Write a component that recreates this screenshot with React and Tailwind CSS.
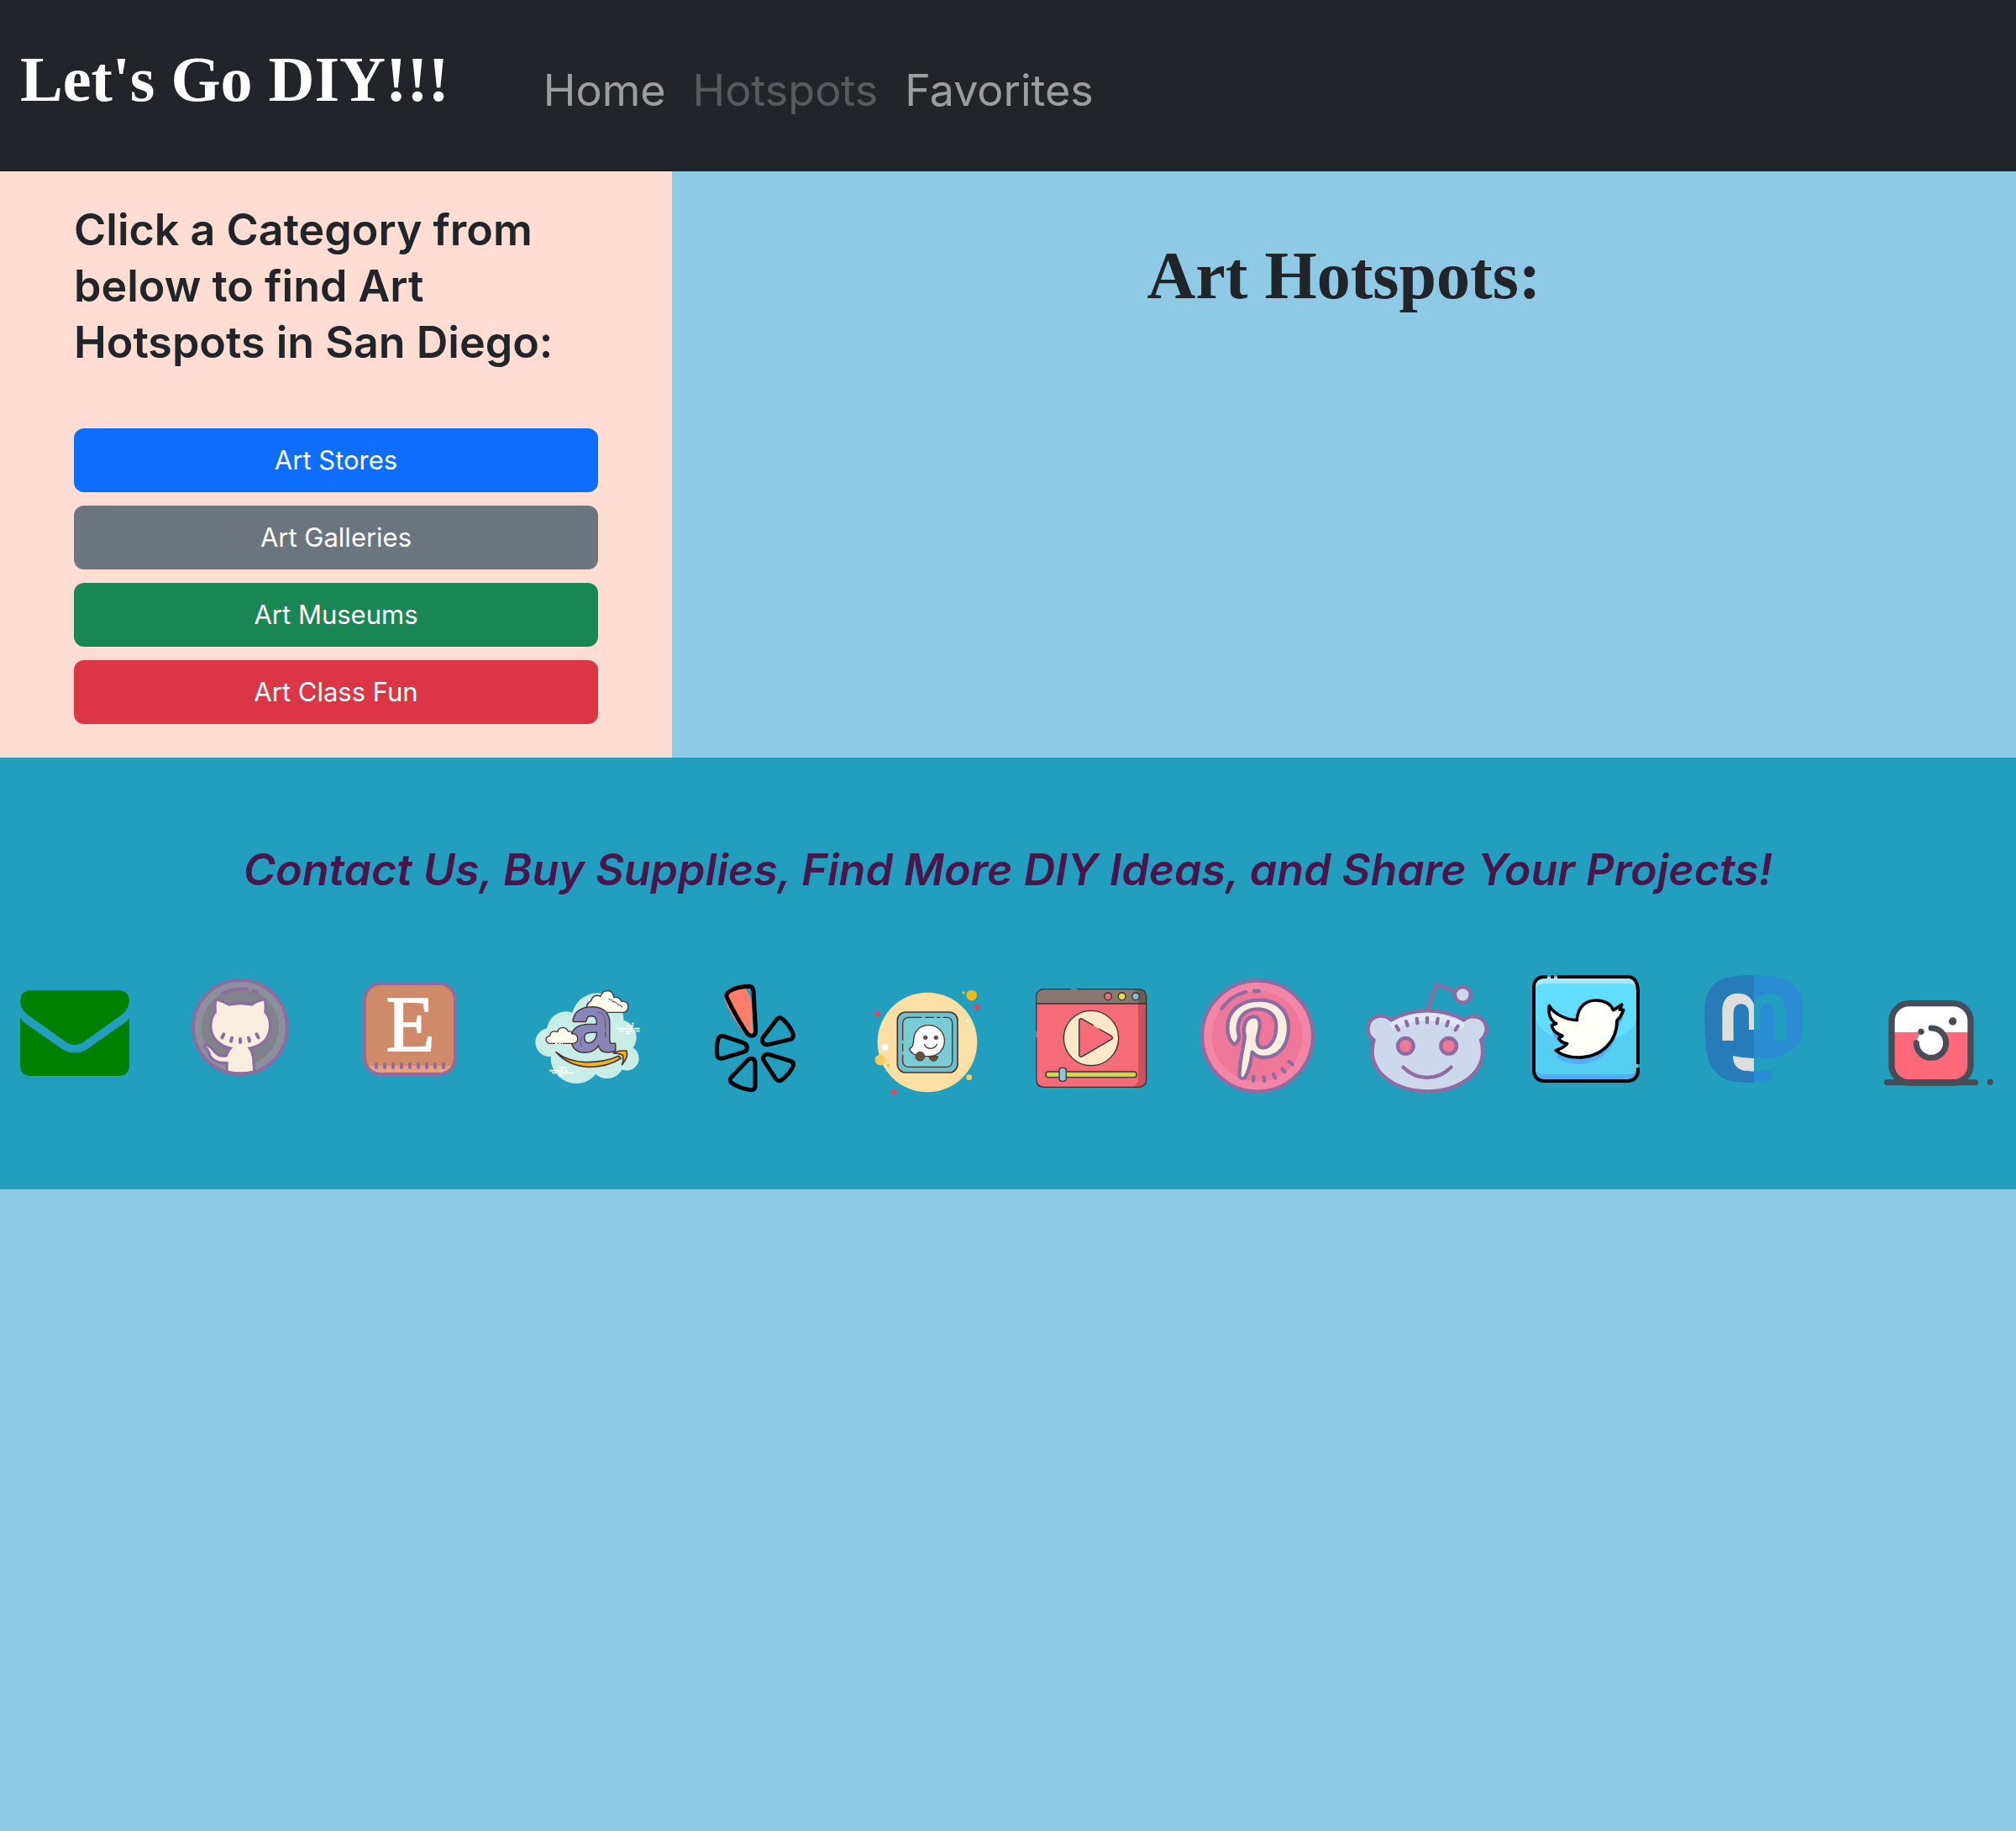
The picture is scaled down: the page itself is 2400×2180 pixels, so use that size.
import React from "react";

const PURPLE = "#8e6c9f";
const BROWN = "#4a3233";

function Icon({ x = 0, children }) {
  return (
    <svg viewBox={`${x} 0 600 540`} className="block h-auto w-full" aria-hidden="true">
      {children}
    </svg>
  );
}

function Mail() {
  return (
    <Icon>
      <g fill="#008000">
        <path d="M106 117H428Q460 120 462 155C460 182 443 200 422 214L302 299Q267 325 232 299L112 214C90 200 74 182 72 155Q74 120 106 117Z" />
        <path d="M72 216C82 230 95 239 107 247L222 327Q267 354 312 327L425 247C440 238 453 229 462 216V386Q460 421 428 423H106Q74 421 72 386Z" />
      </g>
    </Icon>
  );
}

function Github() {
  const cat =
    "M775 155Q795 160 817 173Q858 164 900 173Q920 158 942 155Q946 176 942 196Q960 215 960 240C960 292 930 312 884 321Q900 342 901 368L903 404Q858 414 815 404V372C785 374 765 366 755 350Q748 326 735 317Q750 322 762 338C775 356 795 360 812 354Q817 336 832 321C790 313 757 290 757 240Q759 213 774 196Q771 176 775 155Z";
  return (
    <Icon x={600}>
      <clipPath id="gh">
        <circle cx="858" cy="249" r="168" />
      </clipPath>
      <circle cx="858" cy="249" r="168" fill="#8c8f9c" />
      <circle cx="858" cy="249" r="138" fill="#808389" />
      <g clipPath="url(#gh)">
        <path d={cat} fill="none" stroke={PURPLE} strokeWidth="20" strokeLinejoin="round" />
        <path d={cat} fill="#faefde" />
      </g>
      <circle cx="858" cy="249" r="168" fill="none" stroke={PURPLE} strokeWidth="12" />
      <path
        d="M799 274L793 286M828 287L825 299M858 291V303M888 287L891 299M916 274L923 286M793 129Q835 109 880 112M905 119L918 125"
        fill="none"
        stroke={PURPLE}
        strokeWidth="12"
        strokeLinecap="round"
      />
    </Icon>
  );
}

function Etsy() {
  return (
    <Icon>
      <clipPath id="et">
        <rect x="102" y="93" width="324" height="324" rx="58" />
      </clipPath>
      <rect x="102" y="93" width="324" height="324" rx="58" fill="#cf8a6a" />
      <rect x="102" y="387" width="324" height="30" fill="#e4a183" clipPath="url(#et)" />
      <rect x="102" y="93" width="324" height="324" rx="58" fill="none" stroke={PURPLE} strokeWidth="12" />
      <path
        d="M144 381V393M174 381V393M204 381V393M234 381V393M264 381V393M294 381V393M324 381V393M354 381V393M384 381V393"
        stroke={PURPLE}
        strokeWidth="12"
        strokeLinecap="round"
      />
      <text x="266" y="337" textAnchor="middle" fontFamily="Liberation Serif, serif" fontSize="286" fill="#fff" stroke="#fff" strokeWidth="5">
        E
      </text>
    </Icon>
  );
}

function Amazon() {
  return (
    <Icon x={600}>
      <g fill="#c8ede6">
        <circle cx="763" cy="303" r="51" />
        <circle cx="822" cy="262" r="69" />
        <circle cx="934" cy="220" r="93" />
        <circle cx="1010" cy="285" r="63" />
        <circle cx="1038" cy="360" r="44" />
        <circle cx="968" cy="372" r="60" />
        <circle cx="858" cy="359" r="91" />
        <path d="M800 240H1010V380H800Z" />
      </g>
      <g fill="#fffcf0" stroke={BROWN} strokeWidth="4" strokeLinejoin="round" strokeLinecap="round">
        <path d="M898 196H1030Q1046 190 1043 171Q1038 153 1019 157Q1012 139 992 143Q990 119 969 119Q948 121 945 139Q918 128 911 155Q888 167 898 196Z" />
        <path d="M975 149Q986 148 989 159Q1003 156 1006 169Q1018 168 1022 178" fill="none" strokeWidth="3" />
      </g>
      <g fontFamily="Liberation Sans, sans-serif" fontWeight="bold" fontSize="284" textAnchor="middle" strokeLinejoin="round">
        <text x="914" y="332" fill={BROWN} stroke={BROWN} strokeWidth="12">
          a
        </text>
        <text x="914" y="332" fill="#8885b8" stroke="#8885b8" strokeWidth="3" aria-hidden="true">
          a
        </text>
      </g>
      <path d="M937 195Q960 202 962 225V255M962 265V285M880 284Q866 305 878 318" fill="none" stroke={BROWN} strokeWidth="2" />
      <path
        d="M764 307H850Q865 302 863 286Q858 270 843 273Q842 261 829 264Q823 250 809 250Q793 252 791 266Q766 258 764 280Q748 283 750 296Q754 306 764 307Z"
        fill="#fffcf0"
        stroke={BROWN}
        strokeWidth="4"
        strokeLinejoin="round"
      />
      <path d="M783 307H810" stroke="#fff" strokeWidth="5" strokeDasharray="8 4" />
      <g fill="#f2b915" stroke={BROWN} strokeWidth="5" strokeLinejoin="round">
        <path d="M786 338Q825 371 890 374Q960 375 1010 352L1018 360Q970 391 905 391Q830 388 786 338Z" />
        <path d="M991 342Q1010 330 1038 334Q1045 355 1022 383Q1028 362 1024 349Q1010 342 991 342Z" />
      </g>
      <path
        d="M1056 236H1064M1037 244H1063M1002 254H1060M1066 254H1085M1010 263H1027M1032 263H1066M1070 263H1085M1036 272H1050M799 394H824M762 404H812M817 404H828M771 412H788M792 412H851M795 421H809"
        stroke="#fff"
        strokeWidth="5"
      />
    </Icon>
  );
}

function Yelp() {
  return (
    <Icon>
      <path d="M186 148Q205 112 262 112Q284 135 284 170L290 270Q280 285 262 274Q218 225 186 148Z" fill="#ff7e69" />
      <g fill="none" stroke="#000" strokeWidth="15" strokeLinejoin="round">
        <path d="M195 141C188 120 235 103 276 103Q290 104 291 120L299 262C298 283 280 284 269 272Q230 215 195 141Z" />
        <path d="M376 219Q384 210 396 221Q422 244 433 274Q435 287 424 292L345 311C325 314 318 298 325 286Z" />
        <path d="M162 354Q157 320 165 290Q170 278 184 281L255 305C271 310 273 331 257 337L181 360Q168 362 162 354Z" />
        <path d="M347 346L424 370Q437 374 433 387Q420 416 391 438Q380 444 371 434L328 368C320 354 333 342 347 346Z" />
        <path d="M297 376V462Q295 473 283 473Q242 469 211 446Q205 439 210 430L271 366C283 356 296 362 297 376Z" />
      </g>
    </Icon>
  );
}

function Waze() {
  return (
    <Icon x={600}>
      <circle cx="912" cy="303" r="178" fill="#fbdfa3" />
      <g fill="#f0bb16">
        <circle cx="1070" cy="135" r="19" />
        <circle cx="1041" cy="126" r="5" />
        <circle cx="772" cy="385" r="5" />
      </g>
      <g fill="#fbcc5e">
        <circle cx="744" cy="366" r="19" />
        <circle cx="1061" cy="428" r="10" />
      </g>
      <g fill="#ed4257">
        <circle cx="1089" cy="178" r="10" />
        <circle cx="734" cy="202" r="10" />
        <circle cx="792" cy="481" r="10" />
      </g>
      <circle cx="760" cy="320" r="12" fill="#fff" />
      <circle cx="1055" cy="226" r="5" fill="#fff" />
      <rect x="805" y="195" width="215" height="216" rx="30" fill="#6fbfc8" stroke={BROWN} strokeWidth="5" />
      <rect x="824" y="214" width="177" height="177" rx="18" fill="#79ccd3" />
      <path
        d="M824 296V234Q826 215 845 214H892M904 214H936M946 214H958M968 214H982Q1000 216 1001 234V372Q999 390 982 391H845Q826 390 824 372V347M824 335V308"
        fill="none"
        stroke={BROWN}
        strokeWidth="4"
      />
      <path d="M863 298C863 262 886 242 917 242C950 242 973 267 973 298C973 330 950 353 917 353H886C868 350 850 340 848 325Q861 322 863 298Z" fill="#fff" stroke={BROWN} strokeWidth="4" strokeLinejoin="round" />
      <path d="M901 309Q906 325 924 325Q941 324 947 309" fill="none" stroke={BROWN} strokeWidth="4" />
      <g fill="#65513f">
        <circle cx="905" cy="286" r="8" />
        <circle cx="943" cy="286" r="8" />
        <path d="M918 353H950Q948 369 934 370Q920 368 918 353Z" stroke={BROWN} strokeWidth="3" />
        <circle cx="886" cy="353" r="16" stroke={BROWN} strokeWidth="3" />
      </g>
    </Icon>
  );
}

function Video() {
  const line = "#3a2f2b";
  return (
    <Icon>
      <clipPath id="vd">
        <rect x="101" y="113" width="393" height="350" rx="26" />
      </clipPath>
      <g clipPath="url(#vd)">
        <path d="M101 113H494V463H101Z" fill="#d14e5c" />
        <path d="M101 113H465V437Q464 459 438 463H101Z" fill="#f46c79" />
        <path d="M101 113H494V165H101Z" fill="#6b5c50" />
        <path d="M101 113H440Q465 115 465 139V165H101Z" fill="#87796f" />
      </g>
      <path
        d="M224 113H127Q102 115 101 139V264M101 286V437Q103 462 127 463H468Q493 461 494 437V139Q492 115 468 113H246M101 165H494"
        fill="none"
        stroke={line}
        strokeWidth="4"
      />
      <circle cx="297" cy="288" r="98" fill="#fbe8ca" stroke={line} strokeWidth="4" />
      <path d="M254 224Q257 215 266 220L370 281Q377 287 370 292L266 353Q256 358 254 349Z" fill="#f46c79" />
      <path d="M304 242L266 220Q257 215 254 224V349Q256 358 266 353L370 292Q377 287 370 281L325 255" fill="none" stroke={line} strokeWidth="4" strokeLinecap="round" />
      <g stroke={line} strokeWidth="4">
        <circle cx="357" cy="139" r="13" fill="#f46c79" />
        <circle cx="407" cy="139" r="13" fill="#dbe04f" />
        <circle cx="456" cy="139" r="13" fill="#7dbedb" />
        <rect x="135" y="408" width="324" height="20" rx="9" fill="#d3d84b" />
        <rect x="183" y="394" width="25" height="48" rx="9" fill="#8cc4dd" />
      </g>
    </Icon>
  );
}

function Pinterest() {
  return (
    <Icon x={600}>
      <circle cx="891" cy="281" r="198" fill="#f386a6" stroke={PURPLE} strokeWidth="13" />
      <circle cx="890" cy="281" r="162" fill="#ed7899" />
      <path
        d="M808 311C790 298 784 275 784 250C784 190 830 152 900 152C965 152 1002 195 1002 250C1002 312 968 357 915 357C893 357 880 348 872 338C868 372 860 405 848 427Q838 438 827 427C824 390 838 330 846 285C838 250 845 215 876 211C903 210 902 240 896 265C886 295 888 322 912 322C940 322 958 285 958 245C958 205 930 184 890 184C850 184 823 210 821 250C820 272 828 278 824 290Q818 308 808 311Z"
        fill="#faefde"
        stroke={PURPLE}
        strokeWidth="13"
        strokeLinejoin="round"
      />
      <path
        d="M763 183Q797 135 850 123M879 120H897M877 426L876 441M913 426L916 441M948 417L954 430M979 398L988 408M1004 372L1016 382"
        fill="none"
        stroke={PURPLE}
        strokeWidth="13"
        strokeLinecap="round"
      />
    </Icon>
  );
}

function Reddit() {
  return (
    <Icon>
      <g stroke={PURPLE} strokeWidth="13" strokeLinejoin="round" strokeLinecap="round">
        <path d="M300 185L329 97L395 119" fill="none" />
        <circle cx="424" cy="133" r="28" fill="#cdd8ec" />
        <path
          d="M168 223C205 202 250 190 298 190C346 190 392 202 428 223C442 210 465 208 480 214C512 226 520 268 489 295Q495 312 495 336C495 415 410 478 298 478C185 478 101 415 101 336Q101 312 107 295C76 275 80 226 112 213C132 206 154 210 168 223Z"
          fill="#cdd8ec"
        />
      </g>
      <path d="M163 237Q225 199 298 197Q370 199 431 237Q432 256 408 256Q360 225 298 225Q236 225 185 256Q166 253 163 237Z" fill="#e0e6f5" />
      <g stroke={PURPLE} strokeWidth="13" strokeLinecap="round" fill="none">
        <circle cx="220" cy="316" r="28" fill="#ed7899" />
        <circle cx="374" cy="316" r="28" fill="#ed7899" />
        <path d="M212 392Q247 428 297 429Q347 428 382 392" />
        <path d="M187 245L195 259M222 229L227 243M260 219L262 235M297 216V232M335 219L332 235M372 229L367 243M407 245L398 259" />
      </g>
    </Icon>
  );
}

function Twitter() {
  const bird =
    "M733 172C748 200 790 222 832 224C834 175 865 153 900 153C928 153 952 165 962 188L992 168L985 186L998 187Q990 212 975 225C975 300 920 357 836 357C805 357 775 347 756 332Q785 323 797 308Q773 303 767 288L780 280Q745 267 742 242L758 236Q727 220 733 172Z";
  return (
    <Icon x={600}>
      <clipPath id="tw">
        <rect x="678" y="69" width="372" height="372" rx="34" />
      </clipPath>
      <g clipPath="url(#tw)">
        <path d="M678 69H1050V441H678Z" fill="#55aef5" />
        <path d="M678 69H1050V397Q1042 417 1018 417H710Q688 416 678 397Z" fill="#55cff1" />
        <path d="M678 69H1050V200Q1035 300 864 300Q700 300 678 200Z" fill="#61deff" />
        <path d="M678 69H1050V112Q1038 93 1012 93H714Q692 94 678 112Z" fill="#a4ebff" />
      </g>
      <path d="M756 354Q790 381 840 381C905 381 965 330 975 265Q985 238 998 212L970 200L742 250Q742 285 765 300L790 330Z" fill="#55aef5" />
      <path d={bird} fill="#fffffa" stroke="#000" strokeWidth="11" strokeLinejoin="round" />
      <path
        d="M726 69H712Q680 72 678 103V407Q681 438 712 441H1016Q1047 438 1050 407V393M1050 381V120Q1048 71 1016 69H762M738 69H750"
        fill="none"
        stroke="#000"
        strokeWidth="12"
      />
    </Icon>
  );
}

function Mastodon() {
  return (
    <Icon>
      <path d="M264 63C215 63 175 69 150 77C110 93 90 132 88 180C87 240 88 300 96 345C106 400 140 432 185 441Q225 449 264 446Z" fill="#267cb9" />
      <path d="M264 63C310 63 350 68 377 78C420 96 438 140 440 190C440 230 437 260 433 280C425 320 380 350 340 356Q300 361 264 360ZM264 407Q300 408 330 401V432Q300 445 264 446Z" fill="#2a8dd3" />
      <path d="M151 297V190C151 150 172 128 208 128C235 128 253 140 264 167V258H246V200C246 178 235 166 218 166C200 166 191 178 191 200V297ZM189 351Q225 360 264 360V407C215 407 190 395 189 351Z" fill="#dedede" />
      <path d="M264 167C275 140 292 128 320 128C355 128 377 150 377 190V297H339V200C339 178 330 166 312 166C295 166 284 178 284 200V258H264Z" fill="#229fbe" />
    </Icon>
  );
}

function Instagram() {
  const ink = "#464d56";
  return (
    <Icon x={600}>
      <clipPath id="ig">
        <rect x="756" y="164" width="282" height="283" rx="62" />
      </clipPath>
      <g clipPath="url(#ig)">
        <path d="M756 164H1038V267H756Z" fill="#fff" />
        <path d="M756 267H1038V447H756Z" fill="#ff677a" />
      </g>
      <circle cx="897" cy="305" r="52" fill="#fff" />
      <rect x="756" y="164" width="282" height="283" rx="62" fill="none" stroke={ink} strokeWidth="22" />
      <path d="M739 446H1055M897 252A53 53 0 1 1 844 305" fill="none" stroke={ink} strokeWidth="21" strokeLinecap="round" />
      <g fill={ink}>
        <circle cx="861" cy="265" r="11" />
        <circle cx="974" cy="228" r="14" />
        <circle cx="1108" cy="445" r="11" />
      </g>
    </Icon>
  );
}

const links = [
  ["Email", Mail],
  ["GitHub", Github],
  ["Etsy", Etsy],
  ["Amazon", Amazon],
  ["Yelp", Yelp],
  ["Waze", Waze],
  ["Videos", Video],
  ["Pinterest", Pinterest],
  ["Reddit", Reddit],
  ["Twitter", Twitter],
  ["Mastodon", Mastodon],
  ["Instagram", Instagram],
];

const categories = [
  ["Art Stores", "bg-[#0d6efd]"],
  ["Art Galleries", "bg-[#6c757d]"],
  ["Art Museums", "bg-[#198754]"],
  ["Art Class Fun", "bg-[#dc3545]"],
];

export default function App() {
  return (
    <div className="min-h-screen bg-[#8ecae6] font-['Inter',sans-serif] text-[#212529]">
      <header className="flex items-center bg-[#212529] px-6 pt-9 pb-6">
        <a href="#home" className="mr-28 pb-7 font-['Liberation_Serif',serif] text-[76px] leading-[116px] font-bold text-white">
          Let's Go DIY!!!
        </a>
        <nav className="flex gap-8 text-[52px] leading-[84px]">
          <a href="#home" className="text-white/55">Home</a>
          <a href="#hotspots" aria-disabled="true" className="text-white/25">Hotspots</a>
          <a href="#favorites" className="text-white/55">Favorites</a>
        </nav>
      </header>

      <main className="grid grid-cols-3">
        <section className="bg-[#ffddd2] px-22 pt-9 pb-10">
          <h2 className="text-[52px] leading-[67px] font-semibold">
            Click a Category from below to find Art Hotspots in San Diego:
          </h2>
          <div className="mt-[69px] flex flex-col gap-4">
            {categories.map(([label, color]) => (
              <button key={label} type="button" className={`rounded-xl py-3.5 text-[31px] leading-[48px] text-white ${color}`}>
                {label}
              </button>
            ))}
          </div>
        </section>
        <section className="col-span-2 pt-19 text-center">
          <h1 className="font-['Liberation_Serif',serif] text-[80px] leading-[96px] font-bold">Art Hotspots:</h1>
        </section>
      </main>

      <footer className="bg-[#229fbe] pt-25 pb-24">
        <h2 className="text-center text-[52px] leading-[67px] font-semibold text-[#4a154b] italic">
          Contact Us, Buy Supplies, Find More DIY Ideas, and Share Your Projects!
        </h2>
        <ul className="mt-[71px] grid grid-cols-12">
          {links.map(([name, Drawing]) => (
            <li key={name}>
              <a href={`#${name.toLowerCase()}`} aria-label={name} className="block">
                <Drawing />
              </a>
            </li>
          ))}
        </ul>
      </footer>
    </div>
  );
}
